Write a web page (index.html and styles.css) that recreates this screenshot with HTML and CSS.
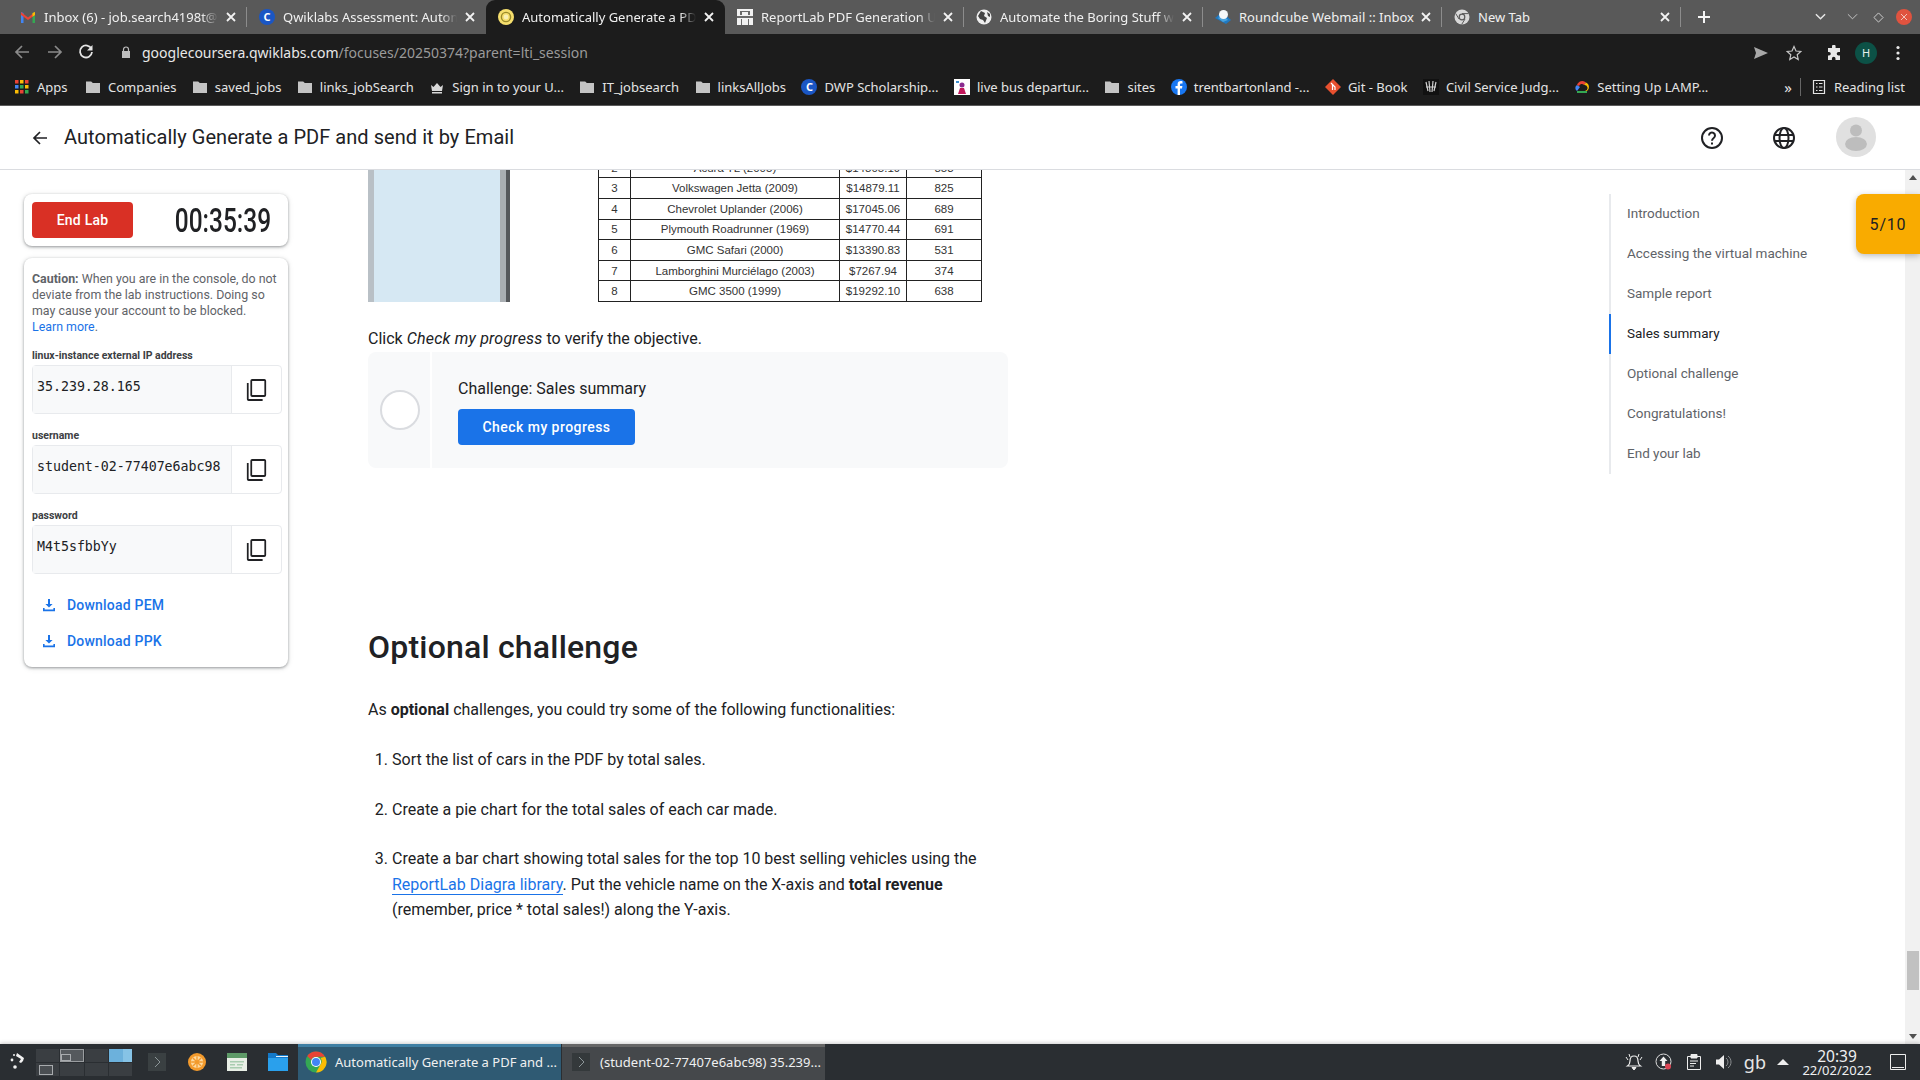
FILE: index.html
```html
<!DOCTYPE html>
<html lang="en">
<head>
<meta charset="utf-8">
<title>Automatically Generate a PDF and send it by Email</title>
<link rel="stylesheet" href="styles.css">
</head>
<body>
<svg class="defs" width="0" height="0">
  <defs>
    <symbol id="folder" viewBox="0 0 16 16"><path d="M1 2.5h5.2l1.6 1.6H15v10H1z" fill="#c4c4c4"/></symbol>
    <symbol id="x" viewBox="0 0 10 10"><path d="M1 1l8 8M9 1l-8 8" stroke="#f2f2f2" stroke-width="1.8" fill="none"/></symbol>
    <symbol id="copy" viewBox="0 0 24 24" preserveAspectRatio="none"><path d="M3 5H1v16c0 1.1.9 2 2 2h16v-2H3V5zm18-4H7c-1.1 0-2 .9-2 2v14c0 1.1.9 2 2 2h14c1.1 0 2-.9 2-2V3c0-1.1-.9-2-2-2zm0 16H7V3h14v14z" fill="#202124"/></symbol>
    <symbol id="dl" viewBox="0 0 14 14"><path d="M6 1h2v5h2.6L7 9.6 3.4 6H6zM1 10h1.6v1.6h8.8V10H13v3.2H1z" fill="#1a73e8"/></symbol>
  </defs>
</svg>
<div class="tabbar">
  <div class="tab sep"><svg class="fav" viewBox="0 0 16 16"><path d="M1 14V3l2.5 1v10z" fill="#4285f4"/><path d="M15 14V3l-2.5 1v10z" fill="#34a853"/><path d="M1 3l7 5.5L15 3v3L8 11 1 6z" fill="#ea4335"/><path d="M12.5 4L15 3v3l-2.5 1.8z" fill="#fbbc04"/></svg><span class="tt fade">Inbox (6) - job.search4198t@g</span><svg class="cl"><use href="#x"/></svg></div>
  <div class="tab"><span class="cfav">C</span><span class="tt fade">Qwiklabs Assessment: Autom</span><svg class="cl"><use href="#x"/></svg></div>
  <div class="tab active"><svg class="fav" viewBox="0 0 16 16"><circle cx="8" cy="8" r="8" fill="#f6df6d"/><circle cx="8" cy="8" r="4.6" fill="none" stroke="#9a8a2a" stroke-width="1.4"/><circle cx="8" cy="8" r="2.4" fill="#f9f0b5"/></svg><span class="tt fade">Automatically Generate a PDF</span><svg class="cl"><use href="#x"/></svg></div>
  <div class="tab sep"><svg class="fav" viewBox="0 0 16 16"><path d="M0 0h16v16H0z" fill="#f2f2f2"/><path d="M0 7h16v2H0zM3 2h2v4H3zM11 2h2v4h-2zM5 2h6v1H5zM4 10h1v6H4zM11 10h1v6h-1z" fill="#6a6a6a"/></svg><span class="tt fade">ReportLab PDF Generation U</span><svg class="cl"><use href="#x"/></svg></div>
  <div class="tab sep"><svg class="fav" viewBox="0 0 16 16"><circle cx="8" cy="8" r="7.5" fill="#eee"/><path d="M5 2l4 2-1 3 3 2-2 5-2-3-3-1-2-3zM11 3l3 2v3l-2-1z" fill="#444"/></svg><span class="tt fade">Automate the Boring Stuff wi</span><svg class="cl"><use href="#x"/></svg></div>
  <div class="tab sep"><svg class="fav" viewBox="0 0 16 16"><path d="M0 9l7-6 9 8-5 4z" fill="#1f78c1"/><path d="M3 9L8 13l5-2-5-5z" fill="#4aa3de"/><ellipse cx="8.500" cy="5.500" rx="4.500" ry="4.500" fill="#f4f7f9"/></svg><span class="tt">Roundcube Webmail :: Inbox</span><svg class="cl"><use href="#x"/></svg></div>
  <div class="tab sep"><svg class="fav" viewBox="0 0 16 16"><circle cx="8" cy="8" r="7.500" fill="#d8d8d8"/><circle cx="8" cy="8" r="3.400" fill="#595959"/><circle cx="8" cy="8" r="2.200" fill="#d8d8d8"/><path d="M8 4.600h6.600M5 10L1.700 4.500M11 10l-3.300 5.400" stroke="#595959" stroke-width="1"/></svg><span class="tt">New Tab</span><svg class="cl"><use href="#x"/></svg></div>
  <svg class="plus" viewBox="0 0 14 14"><path d="M7 1v12M1 7h12" stroke="#f5f5f5" stroke-width="2"/></svg>
  <div class="winctl">
    <svg class="c1" viewBox="0 0 12 8"><path d="M1 1l5 5 5-5" stroke="#e6e6e6" stroke-width="1.600" fill="none"/></svg>
    <svg class="c2" viewBox="0 0 12 8"><path d="M1 1l5 5 5-5" stroke="#cfcfcf" stroke-width="1" fill="none"/></svg>
    <svg class="c3" viewBox="0 0 12 12"><path d="M6 1l5 5-5 5-5-5z" stroke="#d8d8d8" stroke-width="1" fill="none"/></svg>
    <svg class="c4" viewBox="0 0 16 16"><circle cx="8" cy="8" r="8" fill="#e0533f"/><path d="M5 5l6 6M11 5l-6 6" stroke="#f3c4bb" stroke-width="1"/></svg>
  </div>
</div>
<div class="toolbar">
  <svg class="ti" viewBox="0 0 16 16"><path d="M15 8H2M8 2L2 8l6 6" stroke="#8a8a8a" stroke-width="1.700" fill="none"/></svg>
  <svg class="ti" viewBox="0 0 16 16"><path d="M1 8h13M8 2l6 6-6 6" stroke="#8a8a8a" stroke-width="1.700" fill="none"/></svg>
  <svg class="ti rel" viewBox="0 0 16 16"><path d="M13.500 5A6 6 0 1 0 14 8" stroke="#e4e4e4" stroke-width="1.800" fill="none"/><path d="M14.500 1v5.500H9z" fill="#e4e4e4"/></svg>
  <svg class="lock" viewBox="0 0 10 12"><path d="M2.500 5V3.500a2.500 2.500 0 0 1 5 0V5" stroke="#bdbdbd" stroke-width="1.200" fill="none"/><path d="M1 5h8v7H1z" fill="#bdbdbd"/></svg>
  <div class="url"><span class="host">googlecoursera.qwiklabs.com</span>/focuses/20250374?parent=lti_session</div>
  <svg class="tr send" viewBox="0 0 16 16"><path d="M1 2l14 6-14 6 2-6z" fill="#a8a8a8"/></svg>
  <svg class="tr star" viewBox="0 0 16 16"><path d="M8 1.500l2 4.500 4.800.5-3.600 3.200 1 4.800L8 12l-4.200 2.500 1-4.800L1.200 6.500 6 6z" stroke="#c6c6c6" stroke-width="1.200" fill="none"/></svg>
  <svg class="tr puzzle" viewBox="0 0 16 16"><path d="M6 1.500a1.800 1.800 0 0 1 3.600 0V3H14v4h-1.500a1.800 1.800 0 0 0 0 3.600H14V15H9.500v-1.500a1.800 1.800 0 0 0-3.600 0V15H2v-4.400h1a1.800 1.800 0 0 0 0-3.600H2V3h4z" fill="#e8e8e8"/></svg>
  <span class="prof">H</span>
  <svg class="tr dots" viewBox="0 0 4 16"><circle cx="2" cy="2.500" r="1.600" fill="#e8e8e8"/><circle cx="2" cy="8" r="1.600" fill="#e8e8e8"/><circle cx="2" cy="13.500" r="1.600" fill="#e8e8e8"/></svg>
</div>
<div class="bookmarks">
  <div class="bm"><svg class="bi apps" viewBox="0 0 14 14"><path d="M0 0h3.500v3.500H0z" fill="#ea4335"/><path d="M5 0h3.500v3.500H5z" fill="#fbbc04"/><path d="M10 0h3.500v3.500H10z" fill="#ea4335"/><path d="M0 5h3.500v3.500H0z" fill="#4285f4"/><path d="M5 5h3.500v3.500H5z" fill="#34a853"/><path d="M10 5h3.500v3.500H10z" fill="#fbbc04"/><path d="M0 10h3.500v3.500H0z" fill="#fbbc04"/><path d="M5 10h3.500v3.500H5z" fill="#ea4335"/><path d="M10 10h3.500v3.500H10z" fill="#34a853"/></svg>Apps</div>
  <div class="bm"><svg class="bi"><use href="#folder"/></svg>Companies</div>
  <div class="bm"><svg class="bi"><use href="#folder"/></svg>saved_jobs</div>
  <div class="bm"><svg class="bi"><use href="#folder"/></svg>links_jobSearch</div>
  <div class="bm"><svg class="bi" viewBox="0 0 16 16"><path d="M2 6l2.500 2L8 4l3.500 4L14 6l-1 6H3z" fill="#d8d8d8"/><path d="M3 13h10v1.500H3z" fill="#d8d8d8"/></svg>Sign in to your U...</div>
  <div class="bm"><svg class="bi"><use href="#folder"/></svg>IT_jobsearch</div>
  <div class="bm"><svg class="bi"><use href="#folder"/></svg>linksAllJobs</div>
  <div class="bm"><span class="cfav">C</span>DWP Scholarship...</div>
  <div class="bm"><svg class="bi" viewBox="0 0 16 16"><path d="M0 0h16v16H0z" fill="#fff"/><circle cx="8" cy="6" r="2.500" fill="#8a2b8f"/><path d="M4 15l2-6h4l2 6z" fill="#c2185b"/><path d="M2 2h3v2H2z" fill="#3f8fd0"/></svg>live bus departur...</div>
  <div class="bm"><svg class="bi"><use href="#folder"/></svg>sites</div>
  <div class="bm"><svg class="bi" viewBox="0 0 16 16"><circle cx="8" cy="8" r="8" fill="#1877f2"/><path d="M9 16V9.500h2l.4-2.400H9V5.700c0-.8.300-1.300 1.300-1.300h1.200V2.300C11 2.200 10.300 2.100 9.700 2.100 7.800 2.100 6.600 3.200 6.600 5.300v1.800H4.500v2.400h2.100V16z" fill="#fff"/></svg>trentbartonland -...</div>
  <div class="bm"><svg class="bi" viewBox="0 0 16 16"><path d="M8 0l8 8-8 8-8-8z" fill="#e8502f"/><path d="M6 4l4 4v3M7.500 6v5" stroke="#fff" stroke-width="1.200" fill="none"/></svg>Git - Book</div>
  <div class="bm"><svg class="bi" viewBox="0 0 16 16"><path d="M0 0h16v16H0z" fill="#111"/><path d="M3 3l2 9M6 2l1 11M10 2l-1 11M13 3l-2 9M3 8h10" stroke="#d0d0d0" stroke-width="1.200"/></svg>Civil Service Judg...</div>
  <div class="bm"><svg class="bi" viewBox="0 0 16 16"><path d="M3 12a3.500 3.500 0 0 1 0-6L6 8z" fill="#4285f4"/><path d="M3 6a5.500 5.500 0 0 1 9-2.500L10 6a3 3 0 0 0-5 1z" fill="#ea4335"/><path d="M12 3.500A5 5 0 0 1 13 12h-2a3 3 0 0 0-1-6z" fill="#fbbc04"/><path d="M3 12h10v2H3z" fill="#34a853"/></svg>Setting Up LAMP...</div>
  <div class="bm-end">
    <span class="more">»</span><span class="bsep"></span>
    <div class="bm"><svg class="bi" viewBox="0 0 16 16"><path d="M2.500 1.500h11v13h-11zM5 4.500h1.500M8 4.500h3.500M5 8h1.500M8 8h3.500M5 11.500h1.500M8 11.500h3.500" stroke="#e4e4e4" stroke-width="1.200" fill="none"/></svg>Reading list</div>
  </div>
</div>
<header class="pagehead">
  <svg class="back" viewBox="0 0 16 16"><path d="M15 8H2M8 2L2 8l6 6" stroke="#202124" stroke-width="1.700" fill="none"/></svg>
  <h1>Automatically Generate a PDF and send it by Email</h1>
  <svg class="hi help" viewBox="0 0 24 24"><circle cx="12" cy="12" r="10" fill="none" stroke="#202124" stroke-width="2"/><path d="M9 9.500a3 3 0 1 1 4.700 2.500c-1 .7-1.700 1.300-1.700 2.800" fill="none" stroke="#202124" stroke-width="2"/><path d="M11 16.500h2v2h-2z" fill="#202124"/></svg>
  <svg class="hi globe" viewBox="0 0 24 24"><g fill="none" stroke="#202124" stroke-width="2"><circle cx="12" cy="12" r="10"/><ellipse cx="12" cy="12" rx="4.500" ry="10"/><path d="M2.500 9h19M2.500 15h19"/></g></svg>
  <svg class="avatar" viewBox="0 0 40 40"><circle cx="20" cy="20" r="20" fill="#e0e0e0"/><circle cx="20" cy="13.500" r="6" fill="#bdbdbd"/><ellipse cx="20" cy="27" rx="11" ry="7" fill="#bdbdbd"/></svg>
</header>
<main class="main">
  <aside class="side">
    <section class="card timercard">
      <button class="endlab">End Lab</button>
      <div class="timer"><span>00:35:39</span></div>
    </section>
    <section class="card infocard">
      <p class="caution"><b>Caution:</b> When you are in the console, do not deviate from the lab instructions. Doing so may cause your account to be blocked.<br><a>Learn more</a>.</p>
      <label class="flabel">linux-instance external IP address</label>
      <div class="field"><div class="fval">35.239.28.165</div><div class="fcopy"><svg><use href="#copy"/></svg></div></div>
      <label class="flabel">username</label>
      <div class="field"><div class="fval">student-02-77407e6abc98</div><div class="fcopy"><svg><use href="#copy"/></svg></div></div>
      <label class="flabel">password</label>
      <div class="field"><div class="fval">M4t5sfbbYy</div><div class="fcopy"><svg><use href="#copy"/></svg></div></div>
      <div class="dls">
        <a class="dl"><svg><use href="#dl"/></svg>Download PEM</a>
        <a class="dl"><svg><use href="#dl"/></svg>Download PPK</a>
      </div>
    </section>
  </aside>
  <article class="article">
    <div class="figure">
      <div class="phone"></div>
      <div class="tablewrap">
        <table class="cars">
          <tr><td>2</td><td>Acura TL (2005)</td><td>$14805.19</td><td>853</td></tr>
          <tr><td>3</td><td>Volkswagen Jetta (2009)</td><td>$14879.11</td><td>825</td></tr>
          <tr><td>4</td><td>Chevrolet Uplander (2006)</td><td>$17045.06</td><td>689</td></tr>
          <tr><td>5</td><td>Plymouth Roadrunner (1969)</td><td>$14770.44</td><td>691</td></tr>
          <tr><td>6</td><td>GMC Safari (2000)</td><td>$13390.83</td><td>531</td></tr>
          <tr><td>7</td><td>Lamborghini Murciélago (2003)</td><td>$7267.94</td><td>374</td></tr>
          <tr><td>8</td><td>GMC 3500 (1999)</td><td>$19292.10</td><td>638</td></tr>
        </table>
      </div>
    </div>
    <p class="click">Click <em>Check my progress</em> to verify the objective.</p>
    <div class="check">
      <div class="checkl"><span class="ring"></span></div>
      <div class="checkr">
        <div class="checkt">Challenge: Sales summary</div>
        <button class="checkb">Check my progress</button>
      </div>
    </div>
    <h2>Optional challenge</h2>
    <p class="intro">As <b>optional</b> challenges, you could try some of the following functionalities:</p>
    <ol class="steps">
      <li>Sort the list of cars in the PDF by total sales.</li>
      <li>Create a pie chart for the total sales of each car made.</li>
      <li>Create a bar chart showing total sales for the top 10 best selling vehicles using the <a>ReportLab Diagra library</a>. Put the vehicle name on the X-axis and <b>total revenue</b> (remember, price * total sales!) along the Y-axis.</li>
    </ol>
  </article>
  <nav class="toc">
    <a>Introduction</a>
    <a>Accessing the virtual machine</a>
    <a>Sample report</a>
    <a class="on">Sales summary</a>
    <a>Optional challenge</a>
    <a>Congratulations!</a>
    <a>End your lab</a>
  </nav>
  <div class="scroll">
    <svg class="arrow" viewBox="0 0 8 5"><path d="M4 0l4 5H0z" fill="#505050"/></svg>
    <div class="track"><div class="thumb"></div></div>
    <svg class="arrow" viewBox="0 0 8 5"><path d="M0 0h8L4 5z" fill="#505050"/></svg>
  </div>
  <div class="badge">5/10</div>
</main>
<footer class="taskbar">
  <svg class="launcher" viewBox="0 0 16 20"><g fill="#f2f2f2"><circle cx="4" cy="3" r="1"/><circle cx="2" cy="8" r="1.400"/><path d="M7 1l7 5-1 3-2 2-2-1 2-3-5-3z"/><circle cx="5" cy="15" r="1.800"/></g></svg>
  <div class="pager">
    <i></i><i class="pg"><b></b></i><i></i><i class="pb"></i>
    <i class="po"><b></b></i><i></i><i></i><i></i>
  </div>
  <svg class="ti1" viewBox="0 0 18 18"><path d="M0 0h18v18H0z" fill="#3a4042"/><path d="M7 4l5 5-5 5" stroke="#8c9698" stroke-width="1" fill="none"/></svg>
  <svg class="ti2" viewBox="0 0 20 20"><circle cx="10" cy="10" r="10" fill="#f39a2c"/><circle cx="10" cy="10" r="6.800" fill="#fdd9a0"/><path d="M10 3.500v13M3.500 10h13M5.500 5.500l9 9M14.500 5.500l-9 9" stroke="#f39a2c" stroke-width="1.500"/></svg>
  <svg class="ti3" viewBox="0 0 20 18"><path d="M0 0h20v18H0z" fill="#e9efe6"/><path d="M0 0h20v5H0z" fill="#5e9a68"/><path d="M3 8h14v1.500H3zM3 11h5v1.500H3zM10 11h6v1.500h-6zM3 14h12v1.500H3z" fill="#a9cdb0"/></svg>
  <svg class="ti4" viewBox="0 0 20 18"><path d="M0 0h8l2 2h10v16H0z" fill="#1479c9"/><path d="M8 3h12v1H8z" fill="#e8f4fc"/><path d="M0 5h20v13H0z" fill="#2aa0ec"/></svg>
  <div class="task on"><svg class="chrome" viewBox="0 0 22 22"><circle cx="11" cy="11" r="10.500" fill="#34a853"/><path d="M11 .5a10.500 10.500 0 0 1 9.100 5.250H11A5.300 5.300 0 0 0 6.200 9L2.200 5A10.500 10.500 0 0 1 11 .5z" fill="#ea4335"/><path d="M20.100 5.750A10.500 10.500 0 0 1 11 21.500l4.500-8A5.300 5.300 0 0 0 15.500 7z" fill="#fbbc04"/><circle cx="11" cy="11" r="5" fill="#fff"/><circle cx="11" cy="11" r="4" fill="#4285f4"/></svg><span>Automatically Generate a PDF and ...</span></div>
  <div class="task"><svg class="term" viewBox="0 0 18 18"><path d="M0 0h18v18H0z" fill="#34393b"/><path d="M7 4l5 5-5 5" stroke="#8c9698" stroke-width="1" fill="none"/></svg><span>(student-02-77407e6abc98) 35.239...</span></div>
  <div class="tray">
    <svg class="t-bell" viewBox="0 0 18 18"><path d="M9 3c3 0 4 2.500 4 5s1 4 2.500 5h-13C4 12 5 10.500 5 8s1-5 4-5z" fill="none" stroke="#eee" stroke-width="1.200"/><path d="M7 14.500h4l-2 2.500zM1 4l2 3M17 4l-2 3M4 1l1 3M14 1l-1 3" stroke="#eee" fill="#eee"/></svg>
    <svg class="t-up" viewBox="0 0 18 18"><circle cx="8.500" cy="8.500" r="7.500" fill="none" stroke="#ddd" stroke-width="1"/><path d="M8.500 3.500l4 4.500H10.200v5H6.800V8H4.500z" fill="#eee"/><circle cx="13" cy="13.500" r="3" fill="#da4453"/></svg>
    <svg class="t-clip" viewBox="0 0 14 16"><path d="M.5 2.500h13v13H.5z" fill="none" stroke="#eee"/><path d="M4 .5h6V4H4zM3 7h8M3 9.500h6M3 12h4" stroke="#eee" fill="#eee"/></svg>
    <svg class="t-spk" viewBox="0 0 16 16"><path d="M0 5.500h3L8 1v14L3 10.500H0z" fill="#eee"/><path d="M10 4a5 5 0 0 1 0 8M12 2a7.500 7.500 0 0 1 0 12" fill="none" stroke="#8a8d90"/></svg>
    <span class="t-gb">gb</span>
    <svg class="t-caret" viewBox="0 0 12 6"><path d="M6 0l6 6H0z" fill="#eee"/></svg>
    <div class="clock"><span class="time">20:39</span><span class="date">22/02/2022</span></div>
    <svg class="t-desk" viewBox="0 0 16 16"><path d="M.5.500h15v15H.5zM2 13.500h12" fill="none" stroke="#eee"/></svg>
  </div>
</footer>
</body>
</html>
```

FILE: styles.css
```css
* { box-sizing: border-box; }
html, body { margin: 0; height: 100%; }
body {
  width: 1920px; height: 1080px; overflow: hidden;
  display: flex; flex-direction: column;
  font-family: Roboto, sans-serif; color: #202124; background: #fff;
}
.defs { position: absolute; }
p, h1, h2, ol { margin: 0; padding: 0; }

/* browser chrome */
.tabbar { height: 34px; flex: none; background: #595959; display: flex; align-items: stretch; padding-left: 8px; font: 13px/34px "Noto Sans", sans-serif; color: #f0f0f0; }
.tab { width: 239px; flex: none; display: flex; align-items: center; padding: 0 11px 0 12px; gap: 8px; position: relative; }
.tab.sep::after { content: ""; position: absolute; right: 0; top: 7px; bottom: 7px; width: 1px; background: #8c8c8c; }
.tab.active { background: #1c1c1c; border-radius: 9px 9px 0 0; }
.fav { width: 16px; height: 16px; flex: none; }
.cfav { width: 16px; height: 16px; flex: none; border-radius: 50%; background: #1a56c4; color: #fff; font: 700 11px/16px "Noto Sans", sans-serif; text-align: center; }
.tt { flex: 1; min-width: 0; white-space: nowrap; }
.tt.fade { -webkit-mask-image: linear-gradient(90deg, #000 calc(100% - 16px), transparent); mask-image: linear-gradient(90deg, #000 calc(100% - 16px), transparent); }
.cl { width: 10px; height: 10px; flex: none; }
.plus { width: 14px; height: 14px; margin: 10px 0 0 16px; flex: none; }
.winctl { margin-left: auto; display: flex; align-items: center; }
.winctl .c1 { width: 11px; height: 8px; margin-right: 21px; }
.winctl .c2 { width: 11px; height: 8px; margin-right: 15px; }
.winctl .c3 { width: 11px; height: 11px; margin-right: 12px; }
.winctl .c4 { width: 16px; height: 16px; margin-right: 8px; }

.toolbar { height: 36px; flex: none; background: #1c1c1c; display: flex; align-items: center; padding-left: 14px; }
.ti { width: 16px; height: 16px; margin-right: 17px; flex: none; }
.ti.rel { margin-left: -2px; margin-right: 19px; }
.lock { width: 10px; height: 12px; margin: 0 11px 0 8px; flex: none; }
.url { font: 14px "Noto Sans", sans-serif; color: #9a9a9a; width: 1611px; flex: none; white-space: nowrap; }
.host { color: #e8e8e8; }
.tr { height: 16px; flex: none; position: absolute; top: 45px; }
.send { left: 1753px; width: 16px; }
.star { left: 1786px; width: 16px; }
.puzzle { left: 1826px; width: 16px; }
.prof { position: absolute; left: 1855px; top: 42px; width: 22px; height: 22px; border-radius: 50%; background: #0c5146; color: #e8f0ee; font: 11px/22px "Noto Sans", sans-serif; text-align: center; }
.dots { left: 1896px; width: 4px; }

.bookmarks { height: 36px; flex: none; background: #1c1c1c; border-bottom: 1px solid #5a5a5a; display: flex; align-items: center; padding: 0 0 1px 14px; gap: 15.400px; font: 13px "Noto Sans", sans-serif; color: #e4e4e4; white-space: nowrap; }
.bm { display: flex; align-items: center; gap: 7px; flex: none; }
.bm:first-child { margin-right: 2px; }
.bi { width: 16px; height: 16px; flex: none; }
.bi.apps { width: 16px; height: 14px; }
.bm-end { margin-left: auto; display: flex; align-items: center; padding-right: 15px; }
.more { font-size: 15px; margin-right: 8px; }
.bsep { width: 1px; height: 18px; background: #666; margin-right: 10px; }

/* page header */
.pagehead { height: 64px; flex: none; border-bottom: 1px solid #dadce0; display: flex; align-items: center; padding-left: 32px; }
.back { width: 16px; height: 16px; flex: none; margin-right: 16px; }
h1 { font: 400 20px Roboto, sans-serif; letter-spacing: .05px; margin-bottom: 2px; }
.hi { width: 24px; height: 24px; flex: none; }
.help { margin-left: auto; }
.globe { margin-left: 48px; }
.avatar { width: 40px; height: 40px; flex: none; margin: 0 44px 2px 40px; }

/* main */
.main { flex: 1; min-height: 0; display: flex; position: relative; }
.side { width: 368px; flex: none; padding: 24px 0 0 24px; }
.card { width: 264px; background: #fff; border-radius: 8px; box-shadow: 0 1px 3px rgba(60,64,67,.5), 0 1px 6px rgba(60,64,67,.1); }
.timercard { height: 52px; padding: 8px; display: flex; align-items: center; margin-bottom: 12px; }
.endlab { width: 101px; height: 36px; flex: none; border: 0; border-radius: 4px; background: #d93025; color: #fff; font: 500 14px Roboto, sans-serif; letter-spacing: .2px; }
.timer { flex: 1; min-width: 0; display: flex; justify-content: center; padding-left: 32px; }
.timer span { flex: none; font: 500 34px/36px Roboto, sans-serif; transform: scaleX(.72); white-space: nowrap; color: #202124; }
.infocard { height: 409px; padding: 13px 6px 0 8px; }
.caution { font-size: 12.400px; line-height: 16px; color: #5f6368; }
.caution a { color: #1a73e8; }
.flabel { display: block; font: 700 10.500px/16px Roboto, sans-serif; color: #3c4043; margin: 14px 0 1px; }
.caution + .flabel { margin-top: 13px; }
.field { height: 49px; width: 250px; border: 1px solid #e8eaed; border-radius: 4px; display: flex; }
.fval { flex: 1; background: #f8f9fa; font: 13.300px/24px "DejaVu Sans Mono", monospace; padding: 9px 0 0 4px; border-right: 1px solid #e8eaed; white-space: nowrap; letter-spacing: -.03px; }
.fcopy { width: 49px; flex: none; display: flex; align-items: center; justify-content: center; }
.fcopy svg { width: 21px; height: 24px; }
.dls { padding: 13px 0 0 10px; }
.dl { display: flex; align-items: center; height: 36px; color: #1a73e8; font: 500 14px Roboto, sans-serif; letter-spacing: .2px; }
.dl svg { width: 14px; height: 14px; margin-right: 11px; }

.article { width: 640px; flex: none; font-size: 16px; line-height: 24px; }
.figure { height: 132px; display: flex; gap: 88px; }
.phone { width: 142px; background: linear-gradient(90deg, #b9c0c6 0 6px, #d6e8f3 6px 132px, #a9aeb2 132px 138px, #55585b 138px); }
.tablewrap { height: 132px; overflow: hidden; display: flex; align-items: flex-end; }
.cars { width: 384px; border-collapse: collapse; font: 11.500px/14px "Liberation Sans", sans-serif; color: #333; }
.cars td { border: 1.400px solid #222; text-align: center; height: 20.600px; padding: 0; }
.cars td:nth-child(1) { width: 32px; }
.cars td:nth-child(2) { width: 209px; }
.cars td:nth-child(3) { width: 67px; }
.click { margin-top: 25px; }
.click em { letter-spacing: .2px; }
.check { margin-top: 1px; height: 116px; background: #f8f9fa; border-radius: 8px; display: flex; }
.checkl { width: 64px; border-right: 2px solid #fff; display: flex; align-items: center; justify-content: center; padding-left: 2px; }
.ring { width: 40px; height: 40px; border-radius: 50%; border: 2px solid #dadce0; background: #fff; }
.checkr { padding: 25px 0 0 26px; }
.checkt { line-height: 24px; }
.checkb { display: block; margin-top: 8px; width: 177px; height: 36px; border: 0; border-radius: 4px; background: #1a73e8; color: #fff; font: 500 14px Roboto, sans-serif; letter-spacing: .45px; }
h2 { font: 500 32px/40px Roboto, sans-serif; letter-spacing: .2px; margin-top: 159px; }
.intro { margin-top: 31px; }
.steps { margin-top: 25px; padding-left: 24px; }
.steps li { margin-bottom: 24px; line-height: 25.600px; }
.steps a { color: #1a73e8; border-bottom: 1px solid #1a73e8; }

.toc { width: 296px; flex: none; margin: 24px 0 0 601px; height: 280px; border-left: 2px solid #e8eaed; display: flex; flex-direction: column; }
.toc a { height: 40px; flex: none; padding-left: 16px; font: 13.500px/38px Roboto, sans-serif; color: #5f6368; margin-left: -2px; border-left: 2px solid transparent; }
.toc a.on { color: #202124; border-left-color: #1a73e8; }

.scroll { width: 15px; flex: none; background: #f1f1f1; display: flex; flex-direction: column; align-items: center; padding: 5px 0; }
.arrow { width: 8px; height: 5px; flex: none; }
.track { flex: 1; width: 100%; position: relative; }
.thumb { position: absolute; left: 2px; right: 1px; top: 771px; height: 39px; background: #c1c1c1; }
.badge { position: absolute; right: 0; top: 24px; width: 64px; height: 60px; background: #f9ab00; border-radius: 8px 0 0 8px; box-shadow: 0 2px 6px rgba(60,64,67,.35); font: 400 16px/62px Roboto, sans-serif; letter-spacing: .8px; text-align: center; white-space: nowrap; }

/* task bar */
.taskbar { height: 36px; flex: none; background: #2a2e32; display: flex; align-items: center; box-shadow: 0 -1px 4px rgba(0,0,0,.2); font: 13px "Noto Sans", sans-serif; color: #eff0f1; position: relative; }
.launcher { width: 16px; height: 20px; margin-left: 10px; flex: none; }
.pager { width: 96px; height: 27px; margin-left: 10px; flex: none; display: grid; grid-template-columns: repeat(4, 1fr); grid-template-rows: 1fr 1fr; gap: 1px; }
.pager i { background: #3a3e42; display: block; position: relative; }
.pager .pg { background: #55595d; border: 1px solid #9a9da0; }
.pager .pb { background: linear-gradient(90deg, #6cb1dc 60%, #86c3e6 60%); }
.pager b { position: absolute; left: 0; bottom: 0; width: 10px; height: 7px; border: 1px solid #a8abae; }
.pager .po b { left: 3px; bottom: 1px; width: 14px; height: 10px; background: #4a4e52; }
.ti1 { width: 18px; height: 18px; margin-left: 16px; flex: none; }
.ti2 { width: 18px; height: 18px; margin-left: 22px; flex: none; }
.ti3 { width: 20px; height: 18px; margin-left: 21px; flex: none; }
.ti4 { width: 20px; height: 18px; margin-left: 21px; flex: none; }
.task { width: 263px; height: 36px; flex: none; display: flex; align-items: center; background: #45484b; border-top: 3px solid #666; margin-left: 1px; padding: 0 0 3px 9px; white-space: nowrap; }
.task.on { background: #2f5a73; border-top-color: #3f7fa3; margin-left: 10px; padding-left: 7px; }
.chrome { width: 22px; height: 22px; margin-right: 8px; flex: none; }
.term { width: 20px; height: 18px; margin-right: 9px; flex: none; }
.tray { margin-left: auto; display: flex; align-items: center; position: relative; height: 36px; padding-right: 14px; }
.t-bell { width: 18px; height: 18px; }
.t-up { width: 18px; height: 18px; margin-left: 12px; }
.t-clip { width: 14px; height: 16px; margin-left: 14px; }
.t-spk { width: 16px; height: 16px; margin-left: 15px; }
.t-gb { font-size: 18px; margin-left: 12px; line-height: 36px; color: #e6e6e6; }
.t-caret { width: 12px; height: 6px; margin-left: 11px; }
.clock { width: 70px; margin: 0 18px 0 13px; padding-top: 2px; display: flex; flex-direction: column; align-items: center; line-height: 1; }
.time { font-size: 15.500px; }
.date { font-size: 13px; }
.t-desk { width: 16px; height: 16px; }
```
